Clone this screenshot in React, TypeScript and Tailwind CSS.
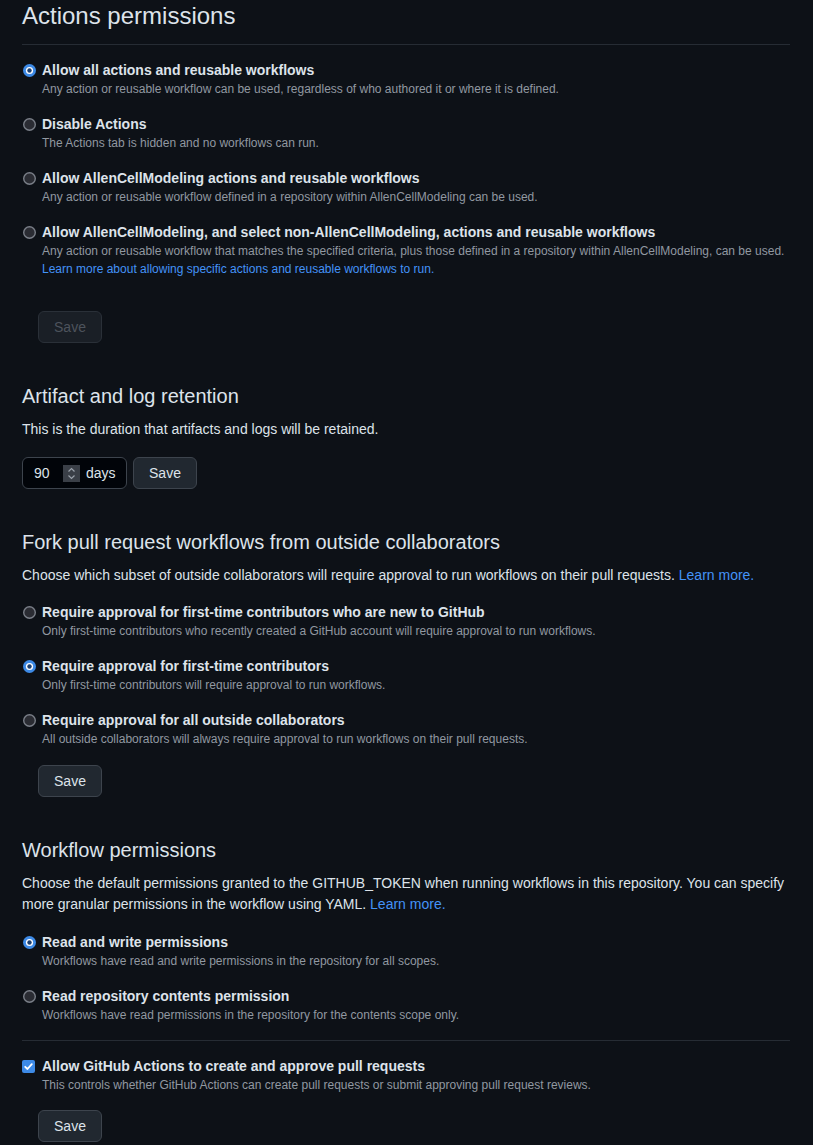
import React, { useState } from 'react';

type Option = {
  id: string;
  label: string;
  note: string;
  link?: string;
};

const actionOptions: Option[] = [
  {
    id: 'all',
    label: 'Allow all actions and reusable workflows',
    note: 'Any action or reusable workflow can be used, regardless of who authored it or where it is defined.',
  },
  {
    id: 'disabled',
    label: 'Disable Actions',
    note: 'The Actions tab is hidden and no workflows can run.',
  },
  {
    id: 'local',
    label: 'Allow AllenCellModeling actions and reusable workflows',
    note: 'Any action or reusable workflow defined in a repository within AllenCellModeling can be used.',
  },
  {
    id: 'selected',
    label: 'Allow AllenCellModeling, and select non-AllenCellModeling, actions and reusable workflows',
    note: 'Any action or reusable workflow that matches the specified criteria, plus those defined in a repository within AllenCellModeling, can be used.',
    link: 'Learn more about allowing specific actions and reusable workflows to run.',
  },
];

const forkOptions: Option[] = [
  {
    id: 'new',
    label: 'Require approval for first-time contributors who are new to GitHub',
    note: 'Only first-time contributors who recently created a GitHub account will require approval to run workflows.',
  },
  {
    id: 'first',
    label: 'Require approval for first-time contributors',
    note: 'Only first-time contributors will require approval to run workflows.',
  },
  {
    id: 'outside',
    label: 'Require approval for all outside collaborators',
    note: 'All outside collaborators will always require approval to run workflows on their pull requests.',
  },
];

const tokenOptions: Option[] = [
  {
    id: 'write',
    label: 'Read and write permissions',
    note: 'Workflows have read and write permissions in the repository for all scopes.',
  },
  {
    id: 'read',
    label: 'Read repository contents permission',
    note: 'Workflows have read permissions in the repository for the contents scope only.',
  },
];

const RadioDot = ({ checked }: { checked: boolean }) =>
  checked ? (
    <svg width="13" height="13" viewBox="0 0 13 13" className="block">
      <circle cx="6.5" cy="6.5" r="6.5" fill="#3d8ae6" />
      <circle cx="6.5" cy="6.5" r="3.6" fill="#ffffff" />
      <circle cx="6.5" cy="6.5" r="2.2" fill="#1b3f70" />
    </svg>
  ) : (
    <svg width="13" height="13" viewBox="0 0 13 13" className="block">
      <circle cx="6.5" cy="6.5" r="5.8" fill="#2a2c33" stroke="#7a7f88" strokeWidth="1.4" />
    </svg>
  );

const RadioGroup = ({
  options,
  value,
  onChange,
}: {
  options: Option[];
  value: string;
  onChange: (id: string) => void;
}) => (
  <div className="flex flex-col gap-4">
    {options.map((opt) => (
      <div key={opt.id} className="flex cursor-pointer" onClick={() => onChange(opt.id)}>
        <div className="w-5 shrink-0 h-5 flex items-center pl-[1px]">
          <RadioDot checked={value === opt.id} />
        </div>
        <div>
          <div className="text-sm font-bold leading-5 text-[#dde3ea]">{opt.label}</div>
          <p className="text-xs leading-[18px] text-[#9198a1]">{opt.note}</p>
          {opt.link && <a className="block text-xs leading-[18px] text-[#4493f8]">{opt.link}</a>}
        </div>
      </div>
    ))}
  </div>
);

const SaveButton = ({ disabled = false, className = '' }: { disabled?: boolean; className?: string }) => (
  <button
    disabled={disabled}
    className={`block h-8 w-16 rounded-md border text-sm ${
      disabled ? 'text-[#4d535c] border-[#2a3038] bg-[#1a1f26]' : 'text-[#dde3ea] border-[#3d444d] bg-[#212830]'
    } ${className}`}
  >
    Save
  </button>
);

export default function App() {
  const [actions, setActions] = useState('all');
  const [fork, setFork] = useState('first');
  const [token, setToken] = useState('write');
  const [canApprove, setCanApprove] = useState(true);

  return (
    <div
      className="min-h-screen bg-[#0d1117] pl-[22px] pr-[23px] pb-1 text-[#dde3ea]"
      style={{ fontFamily: '"Liberation Sans", Arial, sans-serif' }}
    >
      {/* Actions permissions */}
      <h2 className="text-2xl leading-8 font-normal pb-3 border-b border-[#262c34]">Actions permissions</h2>
      <div className="mt-[15px]">
        <RadioGroup options={actionOptions} value={actions} onChange={setActions} />
      </div>
      <SaveButton disabled className="ml-4 mt-[33px]" />

      {/* Artifact and log retention */}
      <h2 className="mt-[38px] text-xl leading-[30px] font-normal">Artifact and log retention</h2>
      <p className="mt-2 text-sm leading-[21px]">This is the duration that artifacts and logs will be retained.</p>
      <div className="mt-[17px] flex items-center gap-[6px]">
        <div className="h-8 w-[105px] rounded-md border border-[#3d444d] bg-[#010409] flex items-center pl-[11px] text-sm">
          <span className="w-[29px]">90</span>
          <span className="w-[17px] h-[17px] bg-[#3a3f47] flex items-center justify-center">
            <svg width="9" height="13" viewBox="0 0 9 13" fill="none" stroke="#9aa1aa" strokeWidth="1.2">
              <path d="M1.5 4.5 L4.5 1.5 L7.5 4.5" />
              <path d="M1.5 8.5 L4.5 11.5 L7.5 8.5" />
            </svg>
          </span>
          <span className="ml-[6px]">days</span>
        </div>
        <SaveButton />
      </div>

      {/* Fork pull request workflows */}
      <h2 className="mt-[38px] text-xl leading-[30px] font-normal">Fork pull request workflows from outside collaborators</h2>
      <p className="mt-2 text-sm leading-[21px]">
        Choose which subset of outside collaborators will require approval to run workflows on their pull requests.{' '}
        <a className="text-[#4493f8]">Learn more.</a>
      </p>
      <div className="mt-4">
        <RadioGroup options={forkOptions} value={fork} onChange={setFork} />
      </div>
      <SaveButton className="ml-4 mt-[17px]" />

      {/* Workflow permissions */}
      <h2 className="mt-[38px] text-xl leading-[30px] font-normal">Workflow permissions</h2>
      <p className="mt-2 text-sm leading-[21px]">
        Choose the default permissions granted to the GITHUB_TOKEN when running workflows in this repository. You can
        specify more granular permissions in the workflow using YAML. <a className="text-[#4493f8]">Learn more.</a>
      </p>
      <div className="mt-[17px]">
        <RadioGroup options={tokenOptions} value={token} onChange={setToken} />
      </div>
      <div className="mt-4 border-t border-[#262c34]" />
      <div className="mt-[15px] flex cursor-pointer" onClick={() => setCanApprove(!canApprove)}>
        <div className="w-5 shrink-0 h-5 flex items-center">
          {canApprove ? (
            <svg width="13" height="13" viewBox="0 0 13 13" className="block">
              <rect width="13" height="13" rx="2" fill="#3d8ae6" />
              <path d="M3.2 6.8 L5.5 9 L9.8 4.2" fill="none" stroke="#ffffff" strokeWidth="1.8" strokeLinecap="round" strokeLinejoin="round" />
            </svg>
          ) : (
            <span className="block w-[13px] h-[13px] rounded-sm border border-[#7a7f88] bg-[#2a2c33]" />
          )}
        </div>
        <div>
          <div className="text-sm font-bold leading-5">Allow GitHub Actions to create and approve pull requests</div>
          <p className="text-xs leading-[18px] text-[#9198a1]">
            This controls whether GitHub Actions can create pull requests or submit approving pull request reviews.
          </p>
        </div>
      </div>
      <SaveButton className="ml-4 mt-4" />
    </div>
  );
}
